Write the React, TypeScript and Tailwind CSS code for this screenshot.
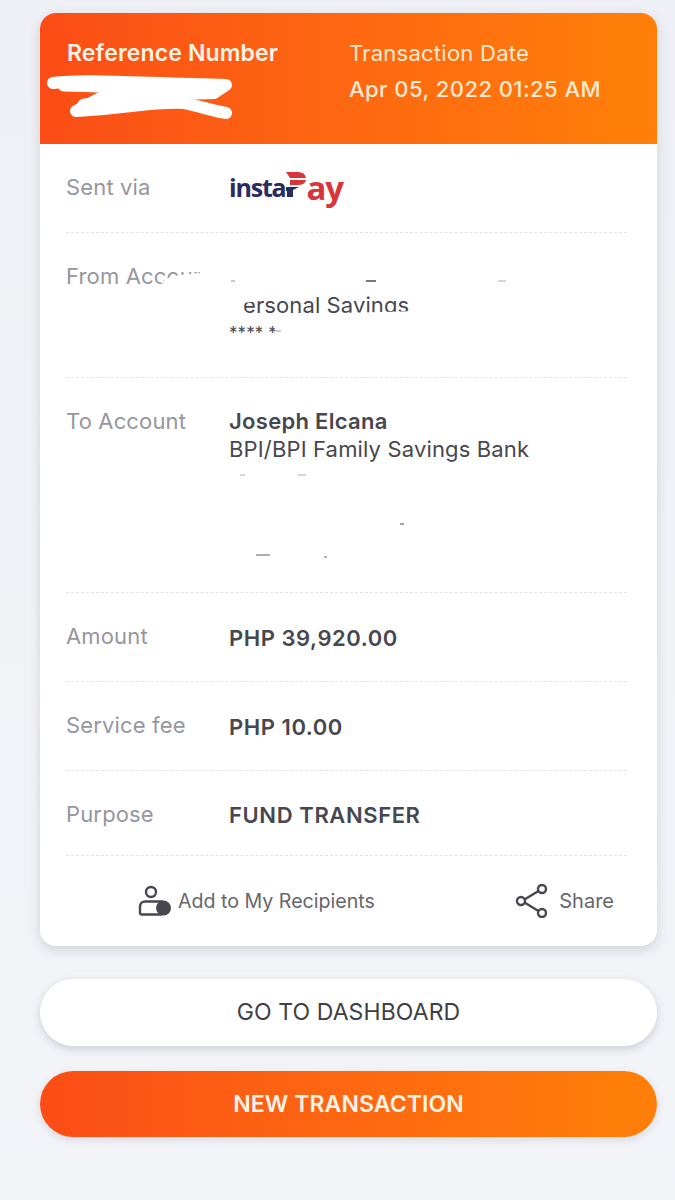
const Row = ({ label, h, children }: { label: string; h: string; children?: React.ReactNode }) => {
  return (
    <div className={`relative mr-[30px] ml-[26px] flex border-b border-dashed border-[#e3e4e8] pt-[31px] ${h}`}>
      <div className="w-[163px] shrink-0 text-[22px] leading-6 tracking-[0.15px] text-[#96969e]">{label}</div>
      <div className="text-[22px] leading-7 tracking-[0.1px] text-[#47474f]">{children}</div>
    </div>
  );
};

const Logo = () => (
  <div className="flex h-9 items-center font-['Open_Sans',sans-serif] font-bold tracking-[-1.2px]">
    <span className="mt-[2px] text-[25px] leading-none text-[#2b2b63]">insta</span>
    <svg width="22" height="30" viewBox="0 0 22 30" className="mb-[3px] ml-[1px] shrink-0">
      <path d="M0 2 L12 2 Q19 2 20 8 L4 8 Z" fill="#d8343a" />
      <path d="M4 10 L20 10 Q19 15 12 15 L4 15 Z" fill="#d8343a" />
      <path d="M0 17 L13 17 L7 20 L7 27 L1 27 L1 21 L0 21 Z" fill="#2b2b63" />
    </svg>
    <span className="-ml-[2px] mt-[3px] text-[33px] leading-none text-[#d8343a]">ay</span>
  </div>
);

const Speck = ({ className }: { className: string }) => <div className={`absolute h-[2px] bg-[#77777f] ${className}`} />;

export default function App() {
  return (
    <div className="min-h-[1200px] bg-gradient-to-b from-[#eef0f5] to-[#f3f4f8] pt-[13px] pl-10 font-['Inter',sans-serif]">
      <div className="w-[617px] overflow-hidden rounded-2xl bg-white shadow-[0_4px_12px_rgba(60,65,90,0.18)]">
        <div className="relative flex h-[131px] bg-gradient-to-r from-[#fb4c16] to-[#ff7f08] pt-[27px] pl-[27px] text-white">
          <div className="w-[282px] text-[23px] leading-[26px] font-semibold tracking-[0.15px] text-[#fff3e8]">Reference Number</div>
          <div className="text-[22px] leading-[26px] tracking-[0.25px] text-[#ffe9d2]">
            <div>Transaction Date</div>
            <div className="mt-[10px] font-medium tracking-[0.45px]">Apr 05, 2022 01:25 AM</div>
          </div>
          <svg className="absolute top-[50px] left-[4px]" width="200" height="70" viewBox="0 0 200 70" fill="none">
            <path d="M9 20 C40 16 90 20 182 22 L170 30 L60 33 L32 48 C80 46 110 38 140 40 C158 44 170 48 182 50" stroke="white" strokeWidth="12" strokeLinecap="round" strokeLinejoin="round" />
            <path d="M20 22 L170 26 M40 42 L140 34" stroke="white" strokeWidth="13" strokeLinecap="round" />
          </svg>
        </div>

        <Row label="Sent via" h="h-[89px]">
          <div className="-mt-[7px]">
            <Logo />
          </div>
        </Row>

        <Row label="From Account" h="h-[145px]">
          <div className="h-7" />
          <div className="-mt-[1px]">Personal Savings</div>
          <div className="text-[17px]">**** ****</div>
          <svg className="absolute top-[28px] left-[94px]" width="300" height="95" viewBox="0 0 300 95">
            <path d="M0 22 L12 15 L40 12 L40 0 L300 0 L300 32 L40 32 L40 26 Z" fill="white" />
            <path d="M66 30 L82 30 L82 54 L66 54 Z" fill="white" />
            <path d="M82 30 L100 30 L100 40 L82 42 Z" fill="white" />
            <path d="M180 52 L260 50 L260 60 L180 60 Z" fill="white" />
            <path d="M114 64 L120 60 L240 60 L240 90 L126 90 L116 73 Z" fill="white" />
          </svg>
          <Speck className="top-[47px] left-[300px] w-[10px]" />
          <Speck className="top-[47px] left-[165px] w-[4px] opacity-40" />
          <Speck className="top-[47px] left-[432px] w-[8px] opacity-30" />
          <Speck className="top-[97px] left-[210px] w-[5px] opacity-40" />
        </Row>

        <Row label="To Account" h="h-[215px]">
          <div className="-mt-[2px] font-semibold tracking-[0.3px]">Joseph Elcana</div>
          <div className="tracking-[0.15px]">BPI/BPI Family Savings Bank</div>
          <Speck className="top-[96px] left-[174px] w-[5px] opacity-30" />
          <Speck className="top-[96px] left-[232px] w-[8px] opacity-30" />
          <Speck className="top-[145px] left-[334px] w-[4px] opacity-70" />
          <Speck className="top-[176px] left-[190px] w-[14px] opacity-60" />
          <Speck className="top-[178px] left-[258px] w-[3px] opacity-60" />
        </Row>

        <Row label="Amount" h="h-[89px]">
          <div className="font-semibold tracking-[0.55px]">PHP 39,920.00</div>
        </Row>

        <Row label="Service fee" h="h-[89px]">
          <div className="font-semibold tracking-[0.55px]">PHP 10.00</div>
        </Row>

        <Row label="Purpose" h="h-[85px]">
          <div className="-mt-[1px] font-semibold tracking-[0.6px]">FUND TRANSFER</div>
        </Row>

        <div className="flex h-[90px] items-center pr-[43px] pl-[98px] text-[19.6px] text-[#66666e]">
          <svg width="34" height="32" viewBox="0 0 34 32" fill="none" className="mr-[6px] shrink-0">
            <circle cx="13" cy="7" r="5" stroke="#47474f" strokeWidth="2.4" />
            <path d="M25 16.5 H7 A5 5 0 0 0 2 21.5 V28 A1.5 1.5 0 0 0 3.5 29.5 H24" stroke="#47474f" strokeWidth="2.4" />
            <circle cx="25.5" cy="23" r="7.5" fill="#47474f" />
          </svg>
          <span className="mt-[1px]">Add to My Recipients</span>
          <svg width="34" height="34" viewBox="0 0 34 34" fill="none" className="mr-[10px] ml-auto shrink-0">
            <path d="M7 17 L26 5.5 M7 17 L26 28.5" stroke="#47474f" strokeWidth="2.4" />
            <circle cx="6" cy="17" r="4" fill="white" stroke="#47474f" strokeWidth="2.4" />
            <circle cx="27" cy="5" r="4" fill="white" stroke="#47474f" strokeWidth="2.4" />
            <circle cx="27" cy="29" r="4" fill="white" stroke="#47474f" strokeWidth="2.4" />
          </svg>
          <span className="text-[20px]">Share</span>
        </div>
      </div>

      <button className="mt-[33px] flex h-[67px] w-[617px] items-center justify-center rounded-full bg-white text-[23px] tracking-[0.1px] text-[#3f3f46] shadow-[0_3px_8px_rgba(60,65,90,0.2)]">
        GO TO DASHBOARD
      </button>
      <button className="mt-[25px] flex h-[66px] w-[617px] items-center justify-center rounded-full bg-gradient-to-r from-[#fb4c16] to-[#ff7f08] text-[23px] font-semibold tracking-[0.1px] text-[#fff3e8] shadow-[0_3px_8px_rgba(60,65,90,0.15)]">
        NEW TRANSACTION
      </button>
    </div>
  );
}
